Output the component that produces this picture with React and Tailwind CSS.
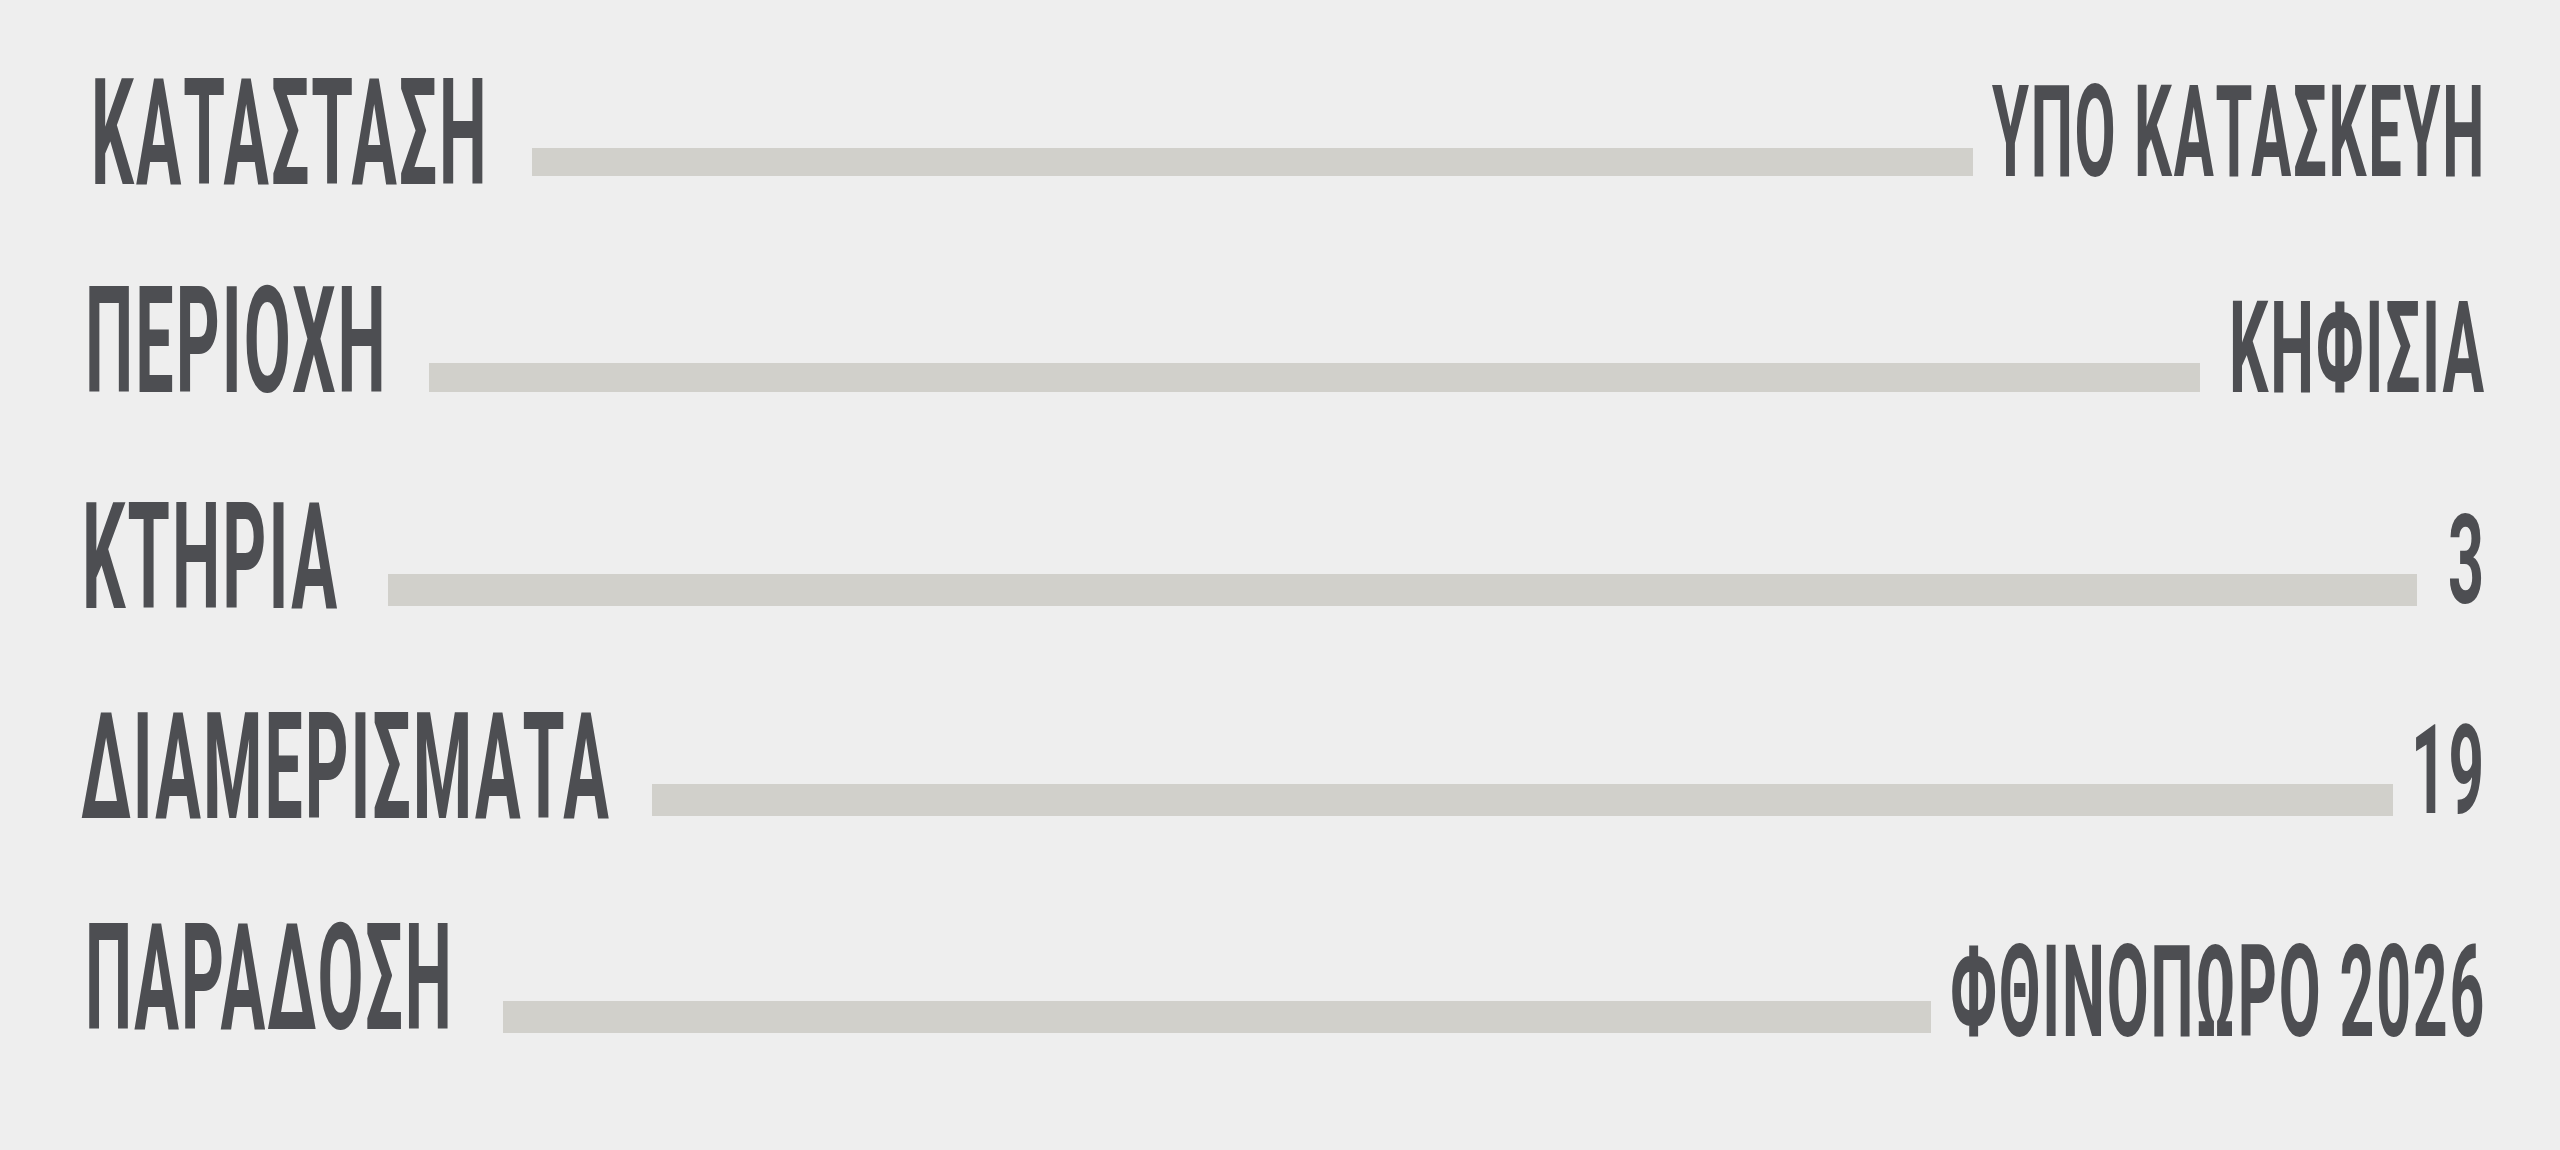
import { useLayoutEffect, useRef, useState } from 'react';

// squeezes a line of text horizontally so it fills the width of its box
const Fit = ({ children, className }) => {
  const box = useRef(null);
  const txt = useRef(null);
  const [sx, setSx] = useState(1);

  useLayoutEffect(() => {
    const fit = () => {
      if (box.current && txt.current) setSx(box.current.clientWidth / txt.current.offsetWidth);
    };
    fit();
    document.fonts?.ready.then(fit);
  }, [children]);

  return (
    <div ref={box} className={`shrink-0 ${className}`}>
      <span ref={txt} className="inline-block origin-left whitespace-nowrap tracking-[0.03em]" style={{ transform: `scaleX(${sx})` }}>
        {children}
      </span>
    </div>
  );
};

const rows = [
  {
    label: 'ΚΑΤΑΣΤΑΣΗ',
    value: 'ΥΠΟ ΚΑΤΑΣΚΕΥΗ',
    row: 'mt-[81px] pl-[91px]',
    labelW: 'w-[398px]',
    bar: 'ml-[43px] mr-[19px] h-[28px] mb-[10px]',
    valueW: 'w-[494px] text-[128px] leading-[91px] h-[91px] mb-[8px]',
  },
  {
    label: 'ΠΕΡΙΟΧΗ',
    value: 'ΚΗΦΙΣΙΑ',
    row: 'mt-[103px] pl-[85px]',
    labelW: 'w-[303px]',
    bar: 'ml-[41px] mr-[29px] h-[29px] mb-[2px]',
    valueW: 'w-[257px] text-[128px] leading-[91px] h-[91px] mb-0',
  },
  {
    label: 'ΚΤΗΡΙΑ',
    value: '3',
    row: 'mt-[111px] pl-[82px]',
    labelW: 'w-[257px]',
    bar: 'ml-[49px] mr-[31px] h-[32px] mb-[4px]',
    valueW: 'w-[38px] text-[124px] leading-[88px] h-[88px] mb-[5px]',
  },
  {
    label: 'ΔΙΑΜΕΡΙΣΜΑΤΑ',
    value: '19',
    row: 'mt-[105px] pl-[81px]',
    labelW: 'w-[530px]',
    bar: 'ml-[41px] mr-[18px] h-[32px] mb-[4px]',
    valueW: 'w-[75px] text-[124px] leading-[88px] h-[88px] mb-[5px]',
  },
  {
    label: 'ΠΑΡΑΔΟΣΗ',
    value: 'ΦΘΙΝΟΠΩΡΟ 2026',
    row: 'mt-[106px] pl-[85px]',
    labelW: 'w-[369px]',
    bar: 'ml-[49px] mr-[19px] h-[32px] -mb-[2px]',
    valueW: 'w-[536px] text-[128px] leading-[91px] h-[91px] -mb-[7px]',
  },
];

const App = () => {
  return (
    <div className="w-full h-[1150px] bg-[#eeeeee] overflow-hidden flex flex-col font-['Roboto','Liberation_Sans',sans-serif] font-bold text-[#4d4e52]">
      {rows.map((r) => (
        <div key={r.label} className={`flex items-end h-[105px] pr-[74px] ${r.row}`}>
          <Fit className={`h-[105px] text-[148px] leading-[105px] ${r.labelW}`}>{r.label}</Fit>
          <div className={`flex-1 bg-[#d1d0cb] ${r.bar}`} />
          <Fit className={r.valueW}>{r.value}</Fit>
        </div>
      ))}
    </div>
  );
};

export default App;
